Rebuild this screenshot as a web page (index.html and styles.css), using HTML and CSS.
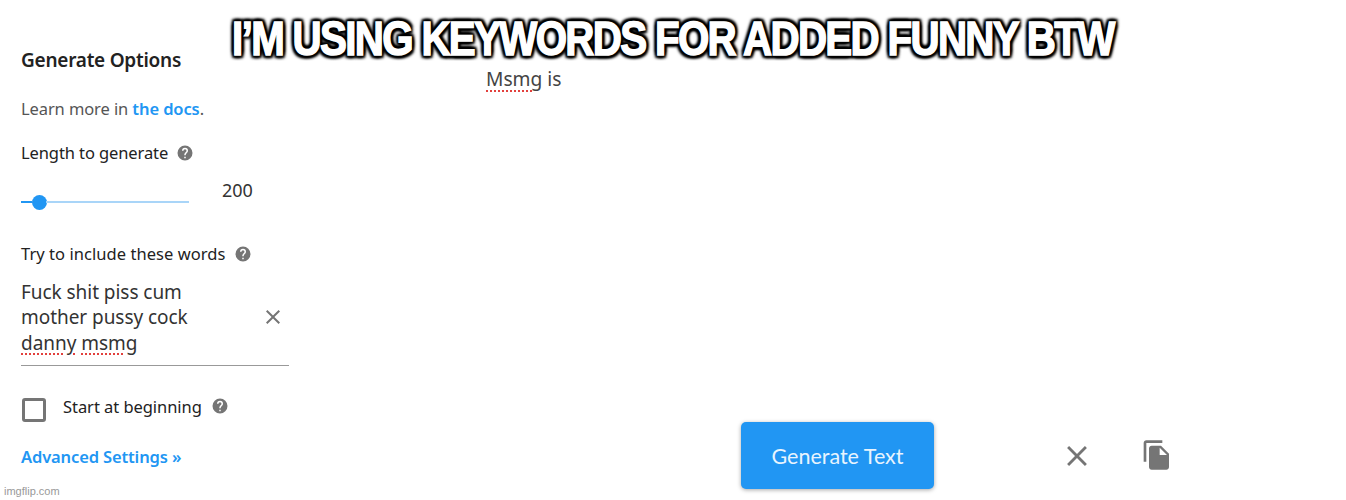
FILE: index.html
```html
<!DOCTYPE html>
<html lang="en">
<head>
<meta charset="utf-8">
<title>Generate Options</title>
<link rel="stylesheet" href="styles.css">
</head>
<body>
<div class="page">
  <aside class="side">
    <h2 class="title">Generate Options</h2>
    <p class="learn">Learn more in <a class="link-b">the docs</a>.</p>
    <div class="label label-len">Length to generate
      <svg class="help" viewBox="0 0 24 24"><path d="M12 2a10 10 0 1 0 0 20 10 10 0 0 0 0-20zm1 17h-2v-2h2v2zm2.07-7.75-.9.92C13.45 12.9 13 13.5 13 15h-2v-.5c0-1.1.45-2.1 1.17-2.83l1.24-1.26A2 2 0 0 0 14 9a2 2 0 0 0-4 0H8a4 4 0 0 1 8 0c0 .88-.36 1.68-.93 2.25z"/></svg>
    </div>
    <div class="slider-row">
      <div class="slider"><span class="done"></span><span class="thumb"></span><span class="rest"></span></div>
      <span class="val">200</span>
    </div>
    <div class="label label-try">Try to include these words
      <svg class="help" viewBox="0 0 24 24"><path d="M12 2a10 10 0 1 0 0 20 10 10 0 0 0 0-20zm1 17h-2v-2h2v2zm2.07-7.75-.9.92C13.45 12.9 13 13.5 13 15h-2v-.5c0-1.1.45-2.1 1.17-2.83l1.24-1.26A2 2 0 0 0 14 9a2 2 0 0 0-4 0H8a4 4 0 0 1 8 0c0 .88-.36 1.68-.93 2.25z"/></svg>
    </div>
    <div class="words">
      <div class="words-text">Fuck shit piss cum<br>mother pussy cock<br><span class="sq">danny</span> <span class="sq">msmg</span></div>
      <svg class="x-small" viewBox="0 0 24 24"><path d="M19 6.41 17.59 5 12 10.59 6.41 5 5 6.41 10.59 12 5 17.59 6.41 19 12 13.41 17.59 19 19 17.59 13.41 12z"/></svg>
    </div>
    <div class="check-row">
      <span class="box"></span>
      <span class="check-label">Start at beginning</span>
      <svg class="help" viewBox="0 0 24 24"><path d="M12 2a10 10 0 1 0 0 20 10 10 0 0 0 0-20zm1 17h-2v-2h2v2zm2.07-7.75-.9.92C13.45 12.9 13 13.5 13 15h-2v-.5c0-1.1.45-2.1 1.17-2.83l1.24-1.26A2 2 0 0 0 14 9a2 2 0 0 0-4 0H8a4 4 0 0 1 8 0c0 .88-.36 1.68-.93 2.25z"/></svg>
    </div>
    <a class="adv">Advanced Settings »</a>
  </aside>
  <main class="main">
    <div class="prompt"><span class="sq">Msmg</span> is</div>
    <div class="actions">
      <button class="gen">Generate Text</button>
      <svg class="x-big" viewBox="0 0 24 24"><path d="M19 6.41 17.59 5 12 10.59 6.41 5 5 6.41 10.59 12 5 17.59 6.41 19 12 13.41 17.59 19 19 17.59 13.41 12z"/></svg>
      <svg class="copy" viewBox="0 0 24 24"><path d="M16 1H4c-1.1 0-2 .9-2 2v14h2V3h12V1zm-1 4 6 6v10c0 1.1-.9 2-2 2H8c-1.1 0-2-.9-2-2V7c0-1.1.9-2 2-2h7zm-1 7h5.5L14 6.5V12z"/></svg>
    </div>
  </main>
</div>
<div class="caption">I’M USING KEYWORDS FOR ADDED FUNNY BTW</div>
<div class="mark">imgflip.com</div>
</body>
</html>
```
FILE: styles.css
```css
* { box-sizing: border-box; }
html, body { margin: 0; height: 500px; overflow: hidden; background: #fff; }
body { font-family: "Noto Sans", "Open Sans", sans-serif; color: #222; position: relative; }
.page { display: flex; height: 500px; }
.side { width: 289px; margin-left: 21px; flex: none; display: flex; flex-direction: column; align-items: flex-start; }
.title { margin: 47px 0 0; font-size: 19px; line-height: 26px; font-weight: 600; letter-spacing: -.25px; color: #222; }
.learn { margin: 24px 0 0; font-size: 16.5px; line-height: 24px; letter-spacing: -.1px; color: #555; }
.link-b { color: #2196f3; font-weight: 600; }
.label { display: flex; align-items: center; font-size: 16.5px; line-height: 24px; letter-spacing: -.1px; color: #222; }
.label-len { margin-top: 20px; }
.label-try { margin-top: 37px; letter-spacing: .05px; }
.label-try .help { margin-left: 9px; }
.help { width: 18px; height: 18px; fill: #757575; margin-left: 8px; flex: none; }
.slider-row { display: flex; align-items: center; width: 100%; height: 24px; margin-top: 16px; }
.slider { display: flex; align-items: center; width: 168px; flex: none; margin-top: 18px; }
.done { width: 11px; height: 2.5px; background: #2196f3; }
.thumb { width: 15px; height: 15px; border-radius: 50%; background: #2196f3; flex: none; margin-right: -1px; }
.rest { flex: 1; height: 2.5px; background: #a9d5f8; }
.val { margin-left: 33px; margin-top: -6px; font-size: 18px; color: #333; }
.words { display: flex; align-items: center; width: 268px; margin-top: 7px; height: 93px; padding-bottom: 2px; border-bottom: 1px solid #999; }
.words-text { flex: 1; font-size: 19px; line-height: 25.5px; letter-spacing: -.05px; color: #333; }
.sq { text-decoration: underline dotted #e2403d 1.5px; text-underline-offset: 4px; }
.x-small { width: 24px; height: 24px; fill: #757575; margin-right: 4px; margin-top: -3px; }
.check-row { display: flex; align-items: center; margin-top: 27px; height: 26px; }
.box { width: 24px; height: 24px; border: 3px solid #757575; border-radius: 3px; flex: none; margin-top: 8px; margin-left: 1px; }
.check-label { margin-left: 17px; font-size: 16.5px; letter-spacing: -.05px; color: #222; }
.check-row .help { margin-left: 9px; }
.adv { margin-top: 26px; font-size: 16.5px; line-height: 24px; font-weight: 600; letter-spacing: -.13px; color: #2196f3; }
.main { flex: 1; display: flex; flex-direction: column; padding-left: 176px; }
.prompt { margin-top: 66px; font-size: 19.2px; line-height: 26px; color: #444; }
.actions { margin-top: auto; margin-bottom: 11px; margin-left: 255px; display: flex; align-items: center; }
.gen { width: 193px; height: 67px; border: 0; border-radius: 5px; background: #2196f3; color: #e8f4fe; font-family: Lato, sans-serif; font-size: 21.5px; box-shadow: 0 1px 4px rgba(0,0,0,.35); }
.x-big { width: 34px; height: 34px; fill: #757575; margin-left: 126px; }
.copy { width: 32px; height: 32px; fill: #757575; margin-left: 47px; margin-top: -2px; }
.caption { position: absolute; left: 0; top: 12px; width: 1346px; text-align: center; font-family: "Liberation Sans", sans-serif; font-weight: 700; font-size: 48px; line-height: 54px; letter-spacing: -2px; color: #fff; transform: scaleX(.84); transform-origin: 672px 0; white-space: nowrap; -webkit-text-stroke: 1.5px #fff; text-shadow: 0 0 3px #000, 0 0 3px #000, 0 0 3px #000, 3px 3px 3px #000, -3px -3px 3px #000, 3px -3px 3px #000, -3px 3px 3px #000, 3px 0 3px #000, -3px 0 3px #000, 0 3px 3px #000, 0 -3px 3px #000; }
.mark { position: absolute; left: 4px; bottom: 3px; font-family: "Liberation Sans", sans-serif; font-size: 11px; color: #999; }
```
